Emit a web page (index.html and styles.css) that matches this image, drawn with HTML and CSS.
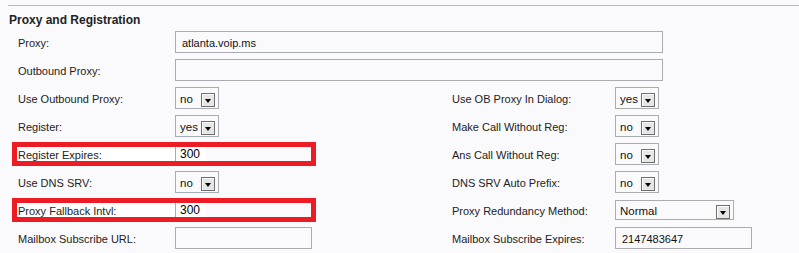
FILE: index.html
```html
<!DOCTYPE html>
<html lang="en">
<head>
  <meta charset="UTF-8">
  <title>Proxy and Registration</title>
  <link rel="stylesheet" href="styles.css">
</head>
<body>

<div class="section">
  <h2>Proxy and Registration</h2>

  <div class="row">
    <div class="pair">
      <span class="label">Proxy:</span>
      <input class="input long" type="text" value="atlanta.voip.ms">
    </div>
  </div>

  <div class="row">
    <div class="pair">
      <span class="label">Outbound Proxy:</span>
      <input class="input long" type="text" value="">
    </div>
  </div>

  <div class="row">
    <div class="pair">
      <span class="label">Use Outbound Proxy:</span>
      <div class="select"><span>no</span><span class="arrow"></span></div>
    </div>
    <div class="pair right">
      <span class="label">Use OB Proxy In Dialog:</span>
      <div class="select"><span>yes</span><span class="arrow"></span></div>
    </div>
  </div>

  <div class="row">
    <div class="pair">
      <span class="label">Register:</span>
      <div class="select"><span>yes</span><span class="arrow"></span></div>
    </div>
    <div class="pair right">
      <span class="label">Make Call Without Reg:</span>
      <div class="select"><span>no</span><span class="arrow"></span></div>
    </div>
  </div>

  <div class="row">
    <div class="pair marked">
      <span class="label">Register Expires:</span>
      <div class="input cut"><span class="val">300</span></div>
    </div>
    <div class="pair right">
      <span class="label">Ans Call Without Reg:</span>
      <div class="select"><span>no</span><span class="arrow"></span></div>
    </div>
  </div>

  <div class="row">
    <div class="pair">
      <span class="label">Use DNS SRV:</span>
      <div class="select"><span>no</span><span class="arrow"></span></div>
    </div>
    <div class="pair right">
      <span class="label">DNS SRV Auto Prefix:</span>
      <div class="select"><span>no</span><span class="arrow"></span></div>
    </div>
  </div>

  <div class="row">
    <div class="pair marked">
      <span class="label">Proxy Fallback Intvl:</span>
      <div class="input cut"><span class="val">300</span></div>
    </div>
    <div class="pair right">
      <span class="label">Proxy Redundancy Method:</span>
      <div class="select wide"><span>Normal</span><span class="arrow"></span></div>
    </div>
  </div>

  <div class="row">
    <div class="pair">
      <span class="label">Mailbox Subscribe URL:</span>
      <input class="input short" type="text" value="">
    </div>
    <div class="pair right">
      <span class="label">Mailbox Subscribe Expires:</span>
      <input class="input short" type="text" value="2147483647">
    </div>
  </div>
</div>

</body>
</html>
```

FILE: styles.css
```css
body {
  margin: 0;
  background-color: #fafafc;
  font-family: 'Liberation Sans', Arial, sans-serif;
  font-size: 11px;
  color: #222;
}
.section {
  margin: 5px 0 0 8px;
  border-top: 1px solid #b6b6dc;
}
h2 {
  margin: 0;
  padding: 7px 0 0 1px;
  font-size: 12px;
  line-height: 14px;
  font-weight: bold;
  color: #222;
}
.row {
  display: flex;
  height: 28px;
  padding-left: 10px;
}
.row:first-of-type {
  margin-top: 1px;
}
.pair {
  display: flex;
  align-items: center;
  flex: none;
  width: 434px;
}
.pair.right {
  width: auto;
}
.label {
  width: 157px;
  flex: none;
  padding-top: 2px;
}
.pair.right .label {
  width: 163px;
}
.input {
  flex: none;
  box-sizing: border-box;
  height: 22px;
  margin: 0;
  padding: 2px 6px 0;
  border: 1px solid #a9adb3;
  background: transparent;
  font: inherit;
  color: #111;
  outline: none;
}
.input.long {
  width: 488px;
}
.input.short {
  width: 137px;
}
.input.cut {
  display: flex;
  align-items: center;
  height: 14px;
  padding: 0;
  border: none;
  border-left: 1px solid #a9adb3;
}
.val {
  background: #fff;
  padding: 1px 6px 0 4px;
  line-height: 13px;
  font-size: 12px;
  color: #000;
}
.select {
  flex: none;
  box-sizing: border-box;
  display: flex;
  align-items: center;
  justify-content: space-between;
  width: 44px;
  height: 22px;
  padding: 1px 3px 0 4px;
  border: 1px solid #a9adb3;
  font-size: 11.5px;
  color: #111;
}
.select.wide {
  width: 119px;
  height: 20px;
}
.arrow {
  position: relative;
  box-sizing: border-box;
  width: 14px;
  height: 14px;
  margin-top: 2px;
  border: 1px solid #6f6f6f;
  background: #e6e6e6;
  box-shadow: inset 1px 1px #fff;
}
.arrow::after {
  content: '';
  position: absolute;
  left: 3px;
  top: 5px;
  border-left: 3.5px solid transparent;
  border-right: 3.5px solid transparent;
  border-top: 4px solid #000;
}
.pair.marked {
  position: relative;
}
.pair.marked .label {
  background: #fff;
}
.pair.marked::after {
  content: '';
  position: absolute;
  left: -6px;
  top: 2px;
  box-sizing: border-box;
  width: 304px;
  height: 24px;
  border: 5px solid #ed1c24;
}
```
